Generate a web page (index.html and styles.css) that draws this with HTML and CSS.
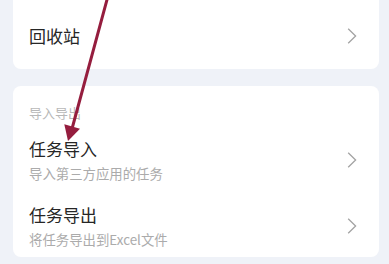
FILE: index.html
```html
<!DOCTYPE html>
<html lang="zh">
<head>
<meta charset="utf-8">
<link rel="stylesheet" href="styles.css">
</head>
<body>
<div class="page">
  <div class="card card-top">
    <div class="row single">
      <div class="title">回收站</div>
      <svg class="chev" width="10" height="16" viewBox="0 0 10 16"><polyline points="1.2,0.8 8.6,8 1.2,15.2" fill="none" stroke="#a3a3a3" stroke-width="1.3"/></svg>
    </div>
  </div>
  <div class="card">
    <div class="section">导入导出</div>
    <div class="row">
      <div class="texts">
        <div class="title">任务导入</div>
        <div class="sub">导入第三方应用的任务</div>
      </div>
      <svg class="chev" width="10" height="16" viewBox="0 0 10 16"><polyline points="1.2,0.8 8.6,8 1.2,15.2" fill="none" stroke="#a3a3a3" stroke-width="1.3"/></svg>
    </div>
    <div class="row last">
      <div class="texts">
        <div class="title">任务导出</div>
        <div class="sub">将任务导出到Excel文件</div>
      </div>
      <svg class="chev" width="10" height="16" viewBox="0 0 10 16"><polyline points="1.2,0.8 8.6,8 1.2,15.2" fill="none" stroke="#a3a3a3" stroke-width="1.3"/></svg>
    </div>
  </div>
</div>
<svg class="arrow" width="389" height="264" viewBox="0 0 389 264">
  <line x1="108" y1="-4" x2="72.5" y2="127" stroke="#951d3e" stroke-width="3" stroke-linecap="round"/>
  <polygon points="68,141 64.3,124.2 80,128.8" fill="#951d3e"/>
</svg>
</body>
</html>
```
FILE: styles.css
```css
html, body {
  margin: 0;
  padding: 0;
  background: #eff2f8;
  font-family: "Noto Sans CJK SC", "Noto Sans", sans-serif;
  overflow: hidden;
}
.page {
  padding: 0 10px 0 13px;
  display: flex;
  flex-direction: column;
  gap: 17px;
}
.card {
  background: #ffffff;
  border-radius: 8px;
}
.card-top {
  margin-top: -30px;
  padding-top: 33px;
}
.row {
  display: flex;
  align-items: center;
  justify-content: space-between;
  padding: 11px 22px 11px 16px;
}
.row.single {
  height: 66px;
  padding-top: 0;
  padding-bottom: 0;
}
.row.last {
  padding-bottom: 9px;
}
.texts {
  display: flex;
  flex-direction: column;
  gap: 4px;
}
.title {
  font-size: 17px;
  line-height: 22px;
  color: #262626;
}
.sub {
  font-size: 13.4px;
  line-height: 18px;
  color: #ababab;
}
.section {
  font-size: 13px;
  line-height: 18px;
  color: #b8b8b8;
  padding: 18px 16px 5px;
}
.chev {
  display: block;
}
.arrow {
  position: absolute;
  left: 0;
  top: 0;
  pointer-events: none;
}
```
